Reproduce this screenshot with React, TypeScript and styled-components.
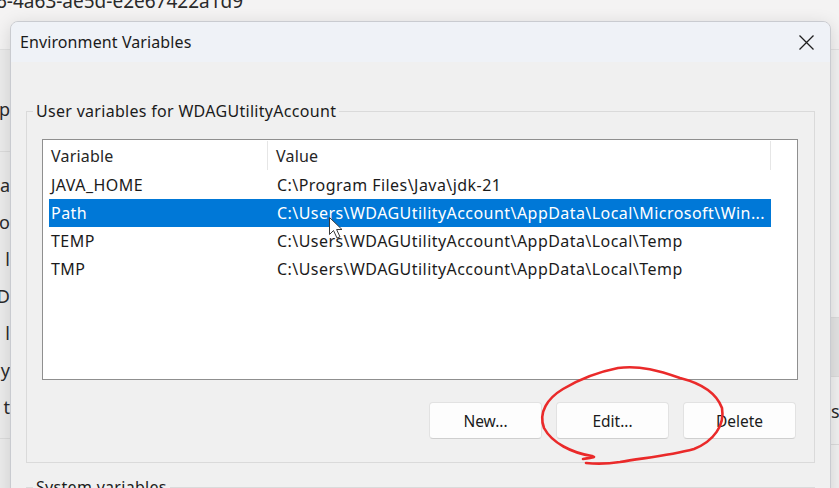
import React from 'react';
import styled, { createGlobalStyle } from 'styled-components';

const Global = createGlobalStyle`
  html, body { margin: 0; padding: 0; background: #f4f3f3; }
  body { font-family: "Noto Sans", "Open Sans", sans-serif; }
  #root { width: 839px; height: 488px; }
`;

const FONT = `"Noto Sans", "Open Sans", sans-serif`;

const Desktop = styled.div`
  position: relative;
  width: 839px;
  height: 488px;
  overflow: hidden;
  background: #f4f3f3;
  font-family: ${FONT};
  color: #1b1b1b;
`;

const BackWindow = styled.div`
  display: grid;
  grid-template-columns: 10px 1fr 8px;
  grid-template-rows: 50px 1fr;
  height: 100%;
`;

const BackTitle = styled.div`
  grid-column: 1 / 4;
  border-bottom: 1px solid #e2e2e2;
  overflow: hidden;
  white-space: nowrap;
  font-size: 19px;
  line-height: 24px;
  color: #2a2a2a;
  margin-top: -11px;
  text-indent: -4px;
`;

const SidePane = styled.div<{ $bg?: string }>`
  display: flex;
  flex-direction: column;
  background: ${(p) => p.$bg || '#ededed'};
  overflow: hidden;
`;

const SideCell = styled.div<{ $h: number; $line?: boolean; $shade?: boolean; $align?: string }>`
  height: ${(p) => p.$h}px;
  flex: none;
  box-sizing: border-box;
  display: flex;
  align-items: center;
  justify-content: ${(p) => p.$align || 'flex-end'};
  white-space: nowrap;
  font-size: 18px;
  color: #2a2a2a;
  border-bottom: ${(p) => (p.$line ? '1px solid #dcdcdc' : 'none')};
  background: ${(p) => (p.$shade ? '#e4e4e4' : 'transparent')};
`;

const Dialog = styled.div`
  position: absolute;
  left: 10px;
  top: 21px;
  width: 819px;
  height: 490px;
  border: 1px solid #c9cbd0;
  border-radius: 8px 8px 0 0;
  overflow: hidden;
  background: #f0f0f0;
  box-shadow: 0 4px 18px rgba(0, 0, 0, 0.14);
  display: flex;
  flex-direction: column;
`;

const TitleBar = styled.div`
  height: 40px;
  flex: none;
  display: flex;
  align-items: center;
  justify-content: space-between;
  background: #eff2f7;
  padding-left: 9px;
`;

const Title = styled.span`
  font-size: 16px;
  letter-spacing: 0.1px;
  color: #1b1b1b;
`;

const CloseButton = styled.button`
  width: 48px;
  height: 40px;
  border: none;
  background: transparent;
  display: flex;
  align-items: center;
  justify-content: center;
  padding: 0;
  color: #1f1f1f;
`;

const Body = styled.div`
  flex: 1;
  padding: 0 15px;
  display: flex;
  flex-direction: column;
`;

const Group = styled.fieldset<{ $top: number }>`
  margin: ${(p) => p.$top}px 0 0 0;
  border: 1px solid #dadada;
  padding: 0 16px 23px 15px;
  min-width: 0;
`;

const Legend = styled.legend`
  font-size: 16px;
  letter-spacing: 0.3px;
  line-height: 20px;
  padding: 0 3px;
  margin-left: -9px;
  color: #1b1b1b;
`;

const ListView = styled.div`
  margin-top: 18px;
  height: 239px;
  border: 1px solid #8f8f8f;
  background: #ffffff;
  display: flex;
  flex-direction: column;
`;

const Header = styled.div`
  height: 31px;
  flex: none;
  display: grid;
  grid-template-columns: 225px 503px 1fr;
`;

const HeaderCell = styled.div<{ $sep?: boolean }>`
  display: flex;
  align-items: center;
  padding-left: 8px;
  font-size: 16px;
  letter-spacing: 0.2px;
  color: #262626;
  border-right: ${(p) => (p.$sep ? '1px solid #e6e6e6' : 'none')};
  margin: 1px 0 1px 0;
`;

const Rows = styled.div`
  padding-left: 6px;
  display: flex;
  flex-direction: column;
`;

const Row = styled.div<{ $selected?: boolean }>`
  width: 722px;
  height: 28px;
  display: grid;
  grid-template-columns: 219px 1fr;
  align-items: center;
  background: ${(p) => (p.$selected ? '#0078d7' : 'transparent')};
  color: ${(p) => (p.$selected ? '#ffffff' : '#1b1b1b')};
  font-size: 16px;
  letter-spacing: 0.45px;
  white-space: nowrap;
`;

const Cell = styled.span<{ $pad: number }>`
  padding-left: ${(p) => p.$pad}px;
  overflow: hidden;
`;

const ButtonRow = styled.div`
  margin-top: 22px;
  display: flex;
  justify-content: flex-end;
  gap: 14px;
  padding-right: 2px;
`;

const Button = styled.button`
  width: 113px;
  height: 37px;
  border: 1px solid #e2e2e2;
  border-bottom-color: #cfcfcf;
  border-radius: 4px;
  background: #fdfdfd;
  font-family: ${FONT};
  font-size: 15.5px;
  color: #1b1b1b;
  padding: 0;
`;

const Overlay = styled.svg`
  position: absolute;
  left: 0;
  top: 0;
  pointer-events: none;
`;

const rows = [
  { name: 'JAVA_HOME', value: 'C:\\Program Files\\Java\\jdk-21' },
  { name: 'Path', value: 'C:\\Users\\WDAGUtilityAccount\\AppData\\Local\\Microsoft\\Win...', selected: true },
  { name: 'TEMP', value: 'C:\\Users\\WDAGUtilityAccount\\AppData\\Local\\Temp' },
  { name: 'TMP', value: 'C:\\Users\\WDAGUtilityAccount\\AppData\\Local\\Temp' },
];

const leftLetters = ['na', 'o', 'l', 'D', 'l', 'y', 't'];

export default function App() {
  return (
    <Desktop>
      <Global />
      <BackWindow>
        <BackTitle>6-4a63-ae5d-e2e67422a1d9</BackTitle>
        <SidePane $bg="#ececec">
          <SideCell $h={40} />
          <SideCell $h={38}>p</SideCell>
          <SideCell $h={24} $line />
          <SideCell $h={14} />
          {leftLetters.map((l, i) => (
            <SideCell key={i} $h={37}>{l}</SideCell>
          ))}
          <SideCell $h={14} $line />
        </SidePane>
        <div />
        <SidePane $bg="#f2f2f2">
          <SideCell $h={268} $line />
          <SideCell $h={59} $line $shade />
          <SideCell $h={68} $line $align="flex-start">s</SideCell>
        </SidePane>
      </BackWindow>

      <Dialog>
        <TitleBar>
          <Title>Environment Variables</Title>
          <CloseButton aria-label="Close">
            <svg width="15" height="15" viewBox="0 0 15 15">
              <path d="M0.5 0.5 L14.5 14.5 M14.5 0.5 L0.5 14.5" stroke="#1f1f1f" strokeWidth="1.3" fill="none" />
            </svg>
          </CloseButton>
        </TitleBar>
        <Body>
          <Group $top={39}>
            <Legend>User variables for WDAGUtilityAccount</Legend>
            <ListView>
              <Header>
                <HeaderCell $sep>Variable</HeaderCell>
                <HeaderCell $sep>Value</HeaderCell>
                <HeaderCell />
              </Header>
              <Rows>
                {rows.map((r) => (
                  <Row key={r.name} $selected={r.selected}>
                    <Cell $pad={2}>{r.name}</Cell>
                    <Cell $pad={9}>{r.value}</Cell>
                  </Row>
                ))}
              </Rows>
            </ListView>
            <ButtonRow>
              <Button>New...</Button>
              <Button>Edit...</Button>
              <Button>Delete</Button>
            </ButtonRow>
          </Group>
          <Group $top={14}>
            <Legend>System variables</Legend>
          </Group>
        </Body>
      </Dialog>

      <Overlay width="839" height="488" viewBox="0 0 839 488">
        <path
          d="M583 459 C 598 457, 594 457, 592 456 C 572 453, 552 443, 544 428 C 538 412, 548 398, 563 389 C 578 380, 598 372, 618 368 C 640 365, 660 371, 680 378 C 700 383, 716 392, 722 408 C 725 425, 714 441, 694 449 C 668 456, 642 458, 620 462 C 607 464, 596 464, 586 463"
          stroke="#ea2a2a"
          strokeWidth="2.6"
          fill="none"
          strokeLinecap="round"
          strokeLinejoin="round"
        />
        <path
          d="M329.5 217.5 L329.5 234.5 L333.5 230.5 L337 238 L340 236.8 L336.6 229.5 L342 229.5 Z"
          fill="#ffffff"
          stroke="#3a3a3a"
          strokeWidth="1"
          strokeLinejoin="round"
        />
      </Overlay>
    </Desktop>
  );
}
